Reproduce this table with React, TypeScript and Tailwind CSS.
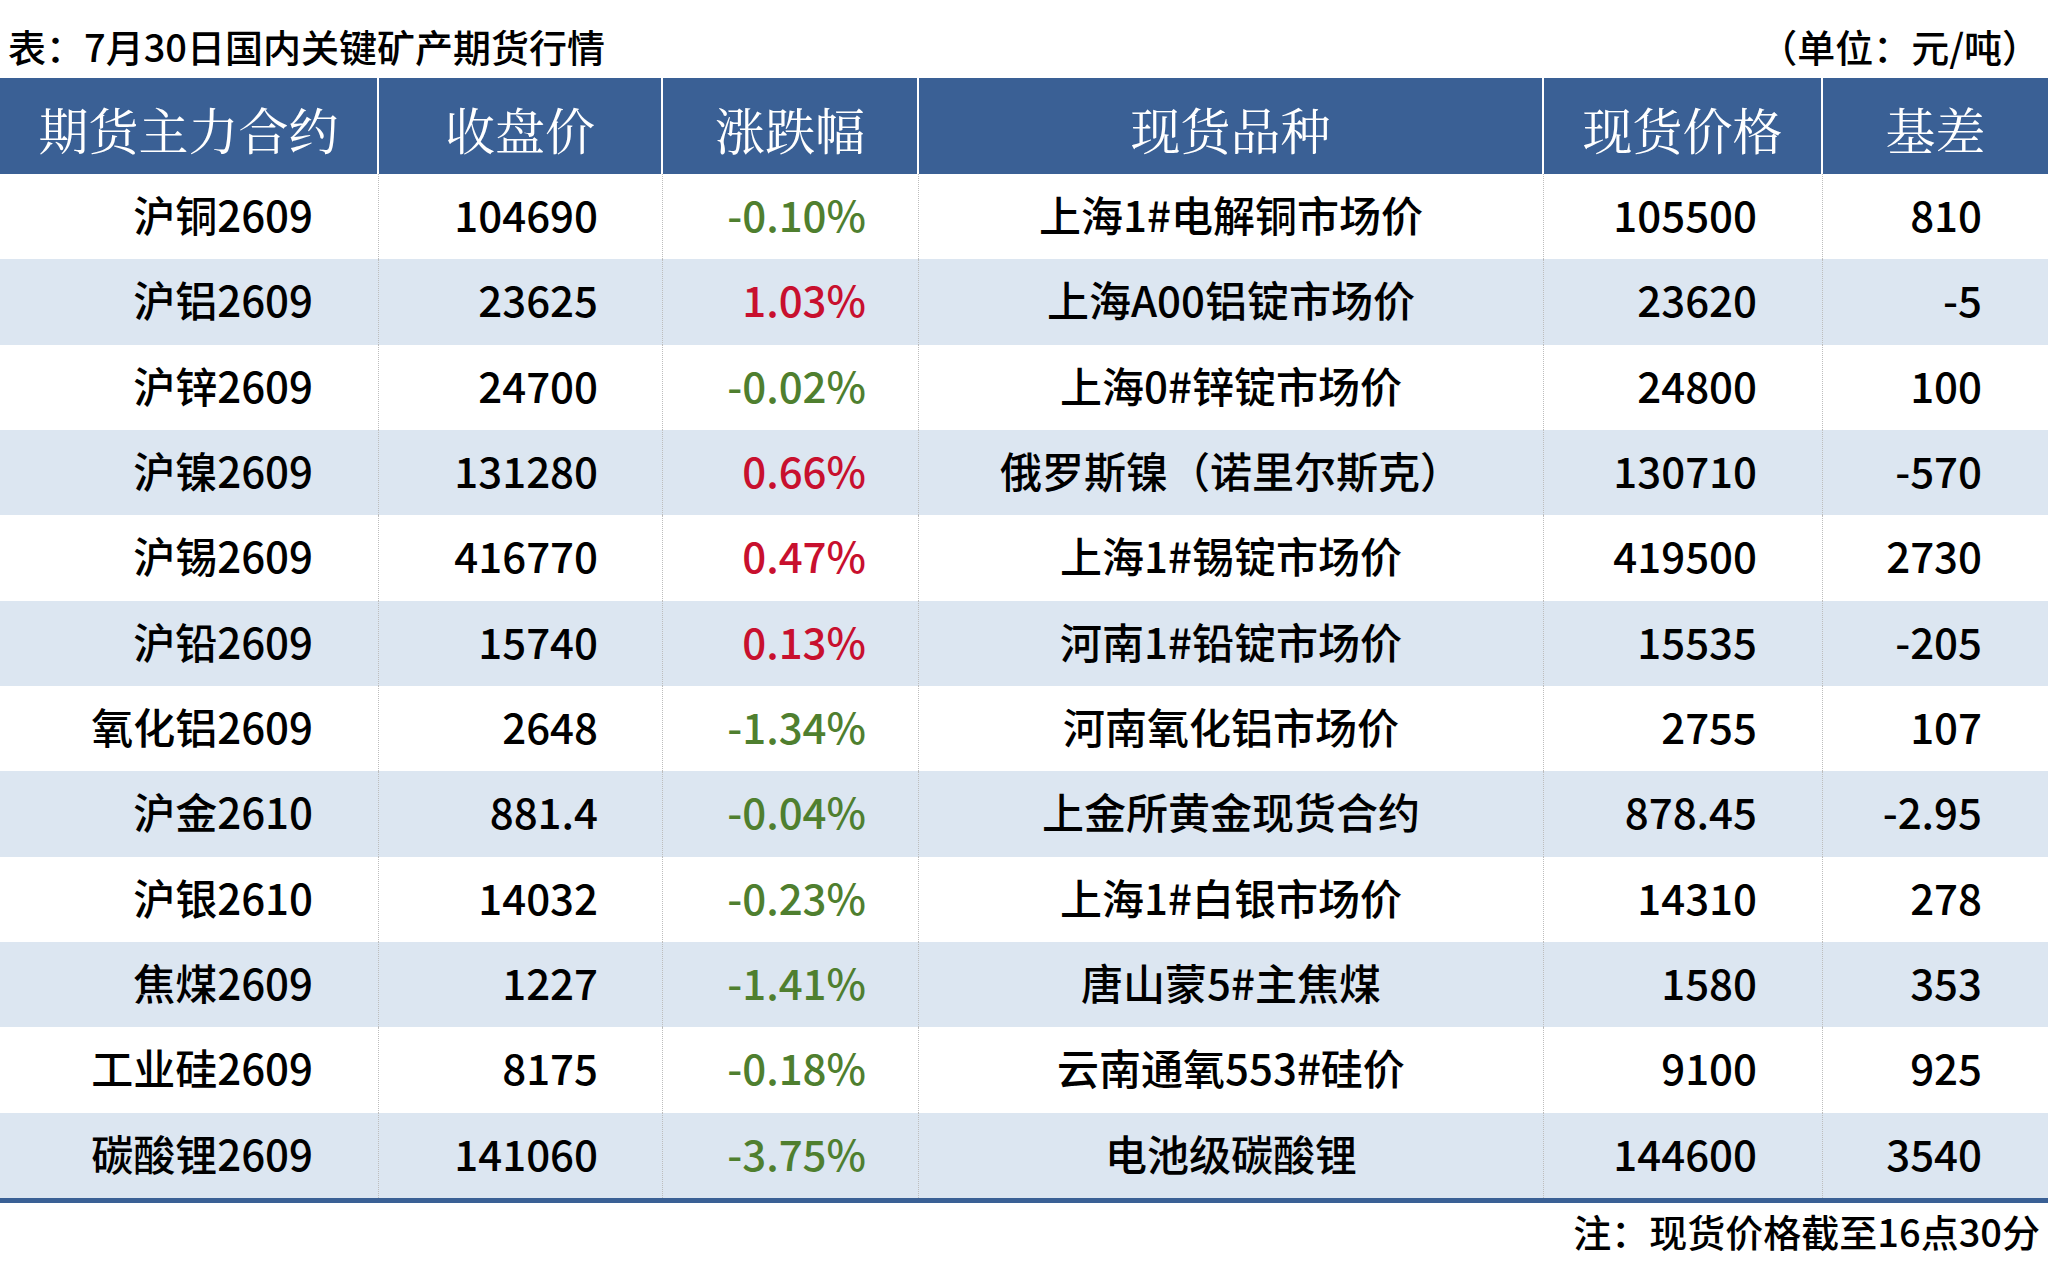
import React from "react";

type Row = [string, string, string, string, string, string];

const rows: Row[] = [
  ["沪铜2609", "104690", "-0.10%", "上海1#电解铜市场价", "105500", "810"],
  ["沪铝2609", "23625", "1.03%", "上海A00铝锭市场价", "23620", "-5"],
  ["沪锌2609", "24700", "-0.02%", "上海0#锌锭市场价", "24800", "100"],
  ["沪镍2609", "131280", "0.66%", "俄罗斯镍（诺里尔斯克）", "130710", "-570"],
  ["沪锡2609", "416770", "0.47%", "上海1#锡锭市场价", "419500", "2730"],
  ["沪铅2609", "15740", "0.13%", "河南1#铅锭市场价", "15535", "-205"],
  ["氧化铝2609", "2648", "-1.34%", "河南氧化铝市场价", "2755", "107"],
  ["沪金2610", "881.4", "-0.04%", "上金所黄金现货合约", "878.45", "-2.95"],
  ["沪银2610", "14032", "-0.23%", "上海1#白银市场价", "14310", "278"],
  ["焦煤2609", "1227", "-1.41%", "唐山蒙5#主焦煤", "1580", "353"],
  ["工业硅2609", "8175", "-0.18%", "云南通氧553#硅价", "9100", "925"],
  ["碳酸锂2609", "141060", "-3.75%", "电池级碳酸锂", "144600", "3540"],
];

const headers = ["期货主力合约", "收盘价", "涨跌幅", "现货品种", "现货价格", "基差"];

const sans = { fontFamily: '"Noto Sans CJK SC", "Noto Sans", sans-serif' } as const;

export default function App() {
  return (
    <div
      className="w-[2048px] h-[1263px] bg-white text-black overflow-hidden"
      style={sans}
    >
      {/* title bar */}
      <div className="h-[78px] flex items-start justify-between pl-[8px] pr-[8px] pt-[27px] font-medium">
        <div className="text-[38px] leading-none">表：7月30日国内关键矿产期货行情</div>
        <div className="text-[38px] leading-none">（单位：元/吨）</div>
      </div>

      {/* header */}
      <div className="grid grid-cols-[379px_284px_256px_625px_279px_225px] h-[96px] bg-[#3a6095]">
        {headers.map((h, i) => (
          <div
            key={h}
            className={`flex items-center justify-center pt-[4px] text-[50px] leading-none text-white ${
              i < 5 ? "border-r-2 border-white" : ""
            }`}
            style={{ fontFamily: '"Noto Serif CJK SC", "Noto Sans CJK SC", serif' }}
          >
            {h}
          </div>
        ))}
      </div>

      {/* body */}
      <div className="grid grid-rows-12 h-[1029px] border-b-[5px] border-[#3a6095] font-medium">
        {rows.map((r, ri) => {
          const pct = r[2];
          const up = !pct.startsWith("-");
          return (
            <div
              key={ri}
              className={`grid grid-cols-[379px_284px_256px_625px_279px_225px] text-[42px] leading-none ${
                ri % 2 === 1 ? "bg-[#dce6f1]" : "bg-white"
              }`}
            >
              <div className="flex items-center justify-end pb-[5px] pr-[65px] border-r border-dotted border-[#bdbdbd]">
                {r[0]}
              </div>
              <div className="flex items-center justify-end pb-[5px] pr-[64px] border-r border-dotted border-[#bdbdbd]">
                {r[1]}
              </div>
              <div
                className={`flex items-center justify-end pb-[5px] pr-[52px] border-r border-dotted border-[#bdbdbd] ${
                  up ? "text-[#c8102e]" : "text-[#4f7f2f]"
                }`}
              >
                {pct}
              </div>
              <div className="flex items-center justify-center pb-[5px] border-r border-dotted border-[#bdbdbd]">
                {r[3]}
              </div>
              <div className="flex items-center justify-end pb-[5px] pr-[65px] border-r border-dotted border-[#bdbdbd]">
                {r[4]}
              </div>
              <div className="flex items-center justify-end pb-[5px] pr-[66px]">{r[5]}</div>
            </div>
          );
        })}
      </div>

      {/* note */}
      <div className="flex justify-end pr-[8px] pt-[9px] font-medium">
        <div className="text-[38px] leading-none">注：现货价格截至16点30分</div>
      </div>
    </div>
  );
}
